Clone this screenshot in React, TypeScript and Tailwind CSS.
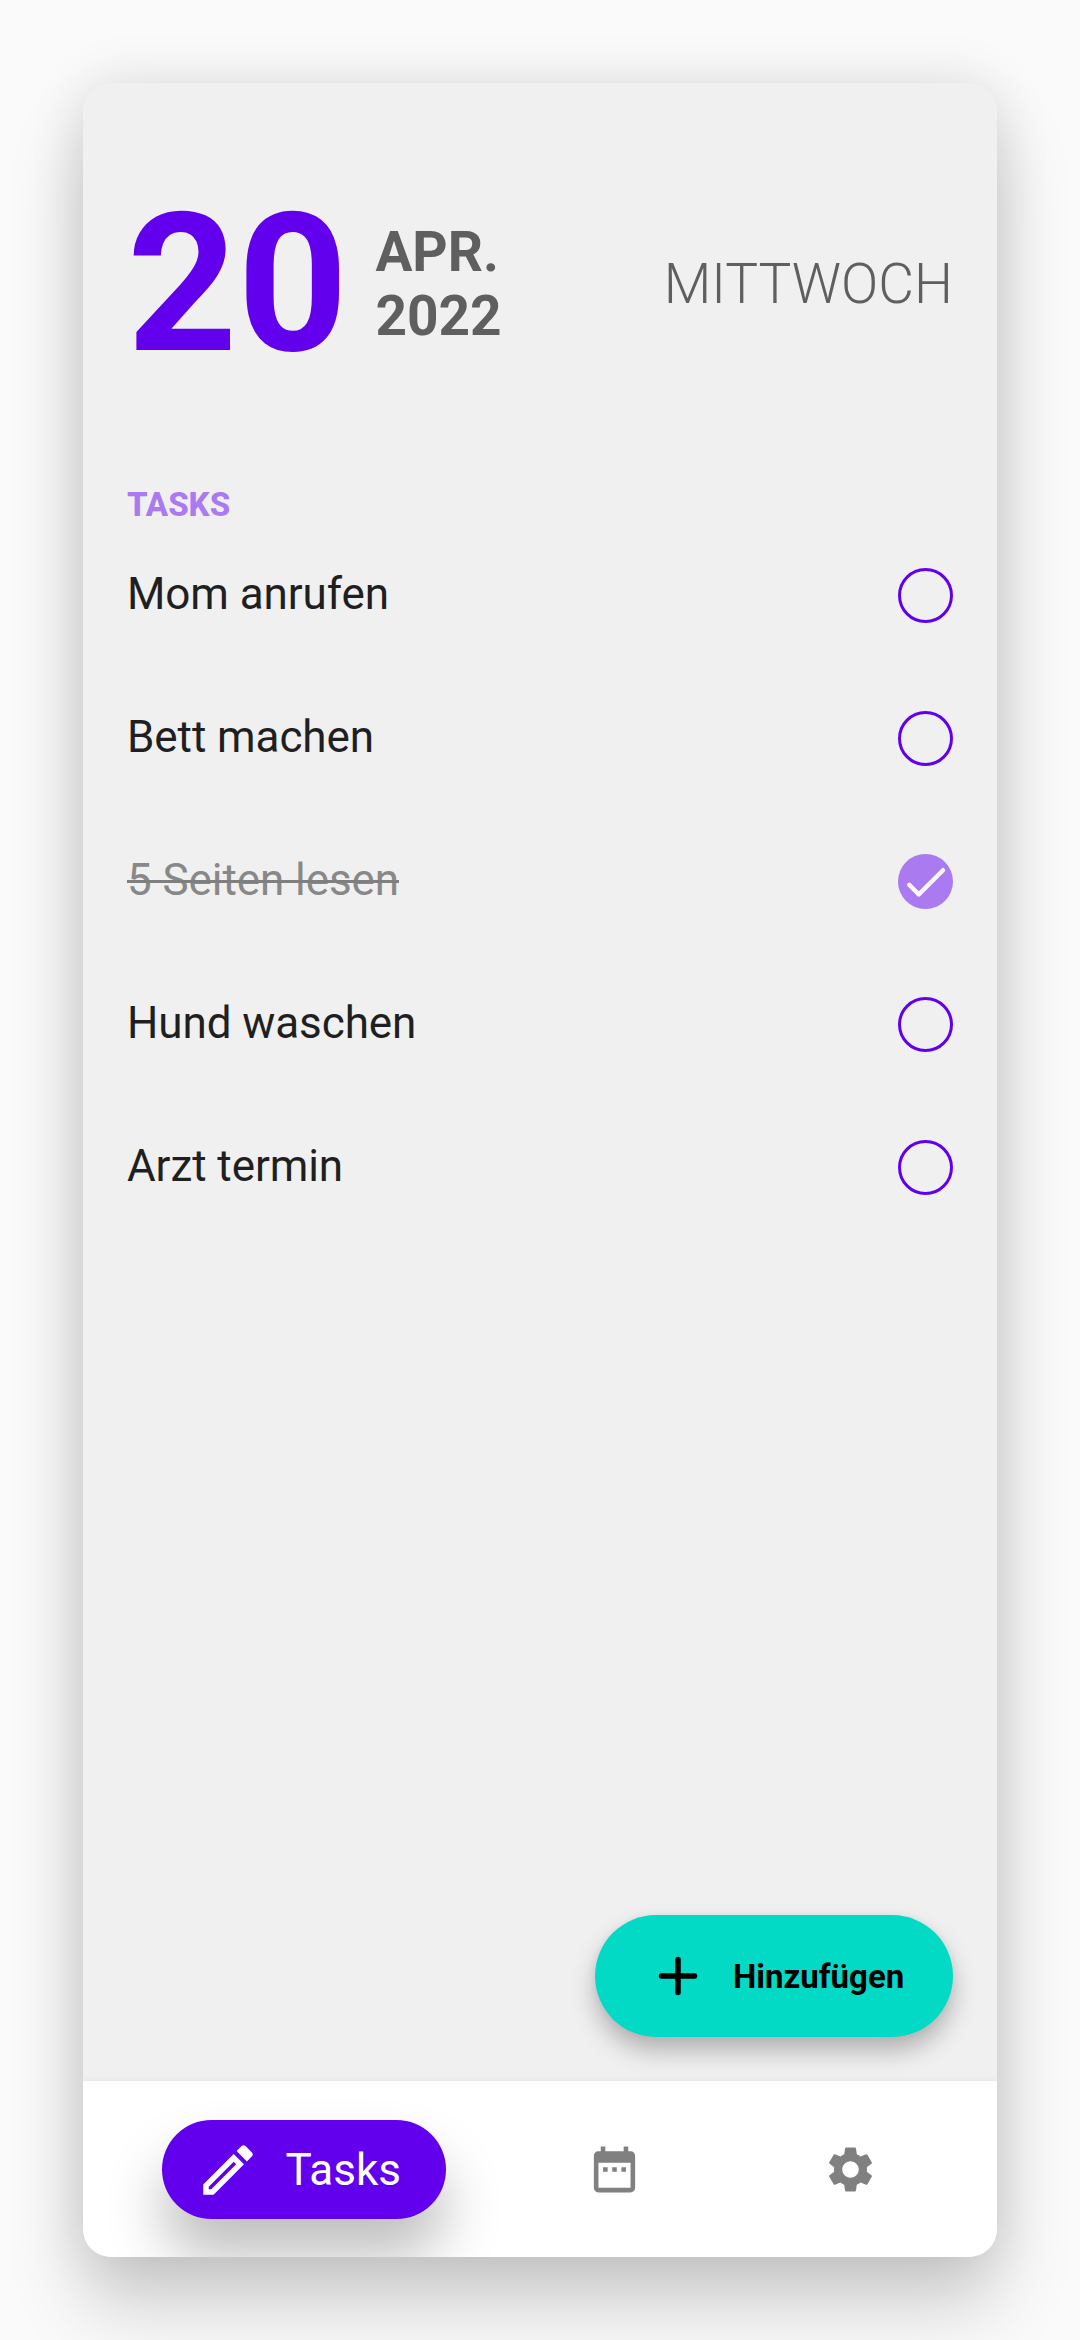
const tasks = [
  { text: "Mom anrufen", done: false },
  { text: "Bett machen", done: false },
  { text: "5 Seiten lesen", done: true },
  { text: "Hund waschen", done: false },
  { text: "Arzt termin", done: false },
];

function Icon({ d, className }: { d: string; className: string }) {
  return (
    <svg viewBox="0 0 24 24" fill="currentColor" className={className}>
      <path d={d} />
    </svg>
  );
}

const PENCIL =
  "M14.06 9.02l.92.92L5.92 19H5v-.92l9.06-9.06M17.66 3c-.25 0-.51.1-.7.29l-1.83 1.83 3.75 3.75 1.83-1.83c.39-.39.39-1.02 0-1.41l-2.34-2.34c-.2-.2-.45-.29-.71-.29zm-3.6 3.19L3 17.25V21h3.75L17.81 9.94l-3.75-3.75z";
const CALENDAR =
  "M9 11H7v2h2v-2zm4 0h-2v2h2v-2zm4 0h-2v2h2v-2zm2-7h-1V2h-2v2H8V2H6v2H5c-1.11 0-1.99.9-1.99 2L3 20c0 1.1.89 2 2 2h14c1.1 0 2-.9 2-2V6c0-1.1-.9-2-2-2zm0 16H5V9h14v11z";
const GEAR =
  "M19.14 12.94c.04-.3.06-.61.06-.94 0-.32-.02-.64-.07-.94l2.03-1.58c.18-.14.23-.41.12-.61l-1.92-3.32c-.12-.22-.37-.29-.59-.22l-2.39.96c-.5-.38-1.03-.7-1.62-.94l-.36-2.54c-.04-.24-.24-.41-.48-.41h-3.84c-.24 0-.43.17-.47.41l-.36 2.54c-.59.24-1.13.57-1.62.94l-2.39-.96c-.22-.08-.47 0-.59.22L2.74 8.87c-.12.21-.08.47.12.61l2.03 1.58c-.05.3-.09.63-.09.94s.02.64.07.94l-2.03 1.58c-.18.14-.23.41-.12.61l1.92 3.32c.12.22.37.29.59.22l2.39-.96c.5.38 1.03.7 1.62.94l.36 2.54c.05.24.24.41.48.41h3.84c.24 0 .44-.17.47-.41l.36-2.54c.59-.24 1.13-.56 1.62-.94l2.39.96c.22.08.47 0 .59-.22l1.92-3.32c.12-.22.07-.47-.12-.61l-2.01-1.58zM12 15.6c-1.98 0-3.6-1.62-3.6-3.6s1.62-3.6 3.6-3.6 3.6 1.62 3.6 3.6-1.62 3.6-3.6 3.6z";

export default function App() {
  return (
    <div className="flex h-[2340px] w-[1080px] overflow-hidden bg-[#fafafa] p-[83px] font-[Roboto,sans-serif]">
      <div className="flex h-[2174px] w-full flex-col overflow-hidden rounded-[28px] bg-[#f0f0f0] shadow-[0_48px_76px_rgba(0,0,0,0.18),0_0_56px_rgba(0,0,0,0.11)]">
        <header className="flex h-[402px] items-center px-[44px]">
          <span className="text-[192.5px] leading-none font-bold text-[#6200ee]">20</span>
          <span className="ml-[27.5px] text-[55px] leading-[64px] font-bold text-[#5f5f5f]">
            APR.
            <br />
            2022
          </span>
          <span className="ml-auto text-[55px] leading-[64px] font-light text-[#5f5f5f]">MITTWOCH</span>
        </header>
        <main className="flex flex-1 flex-col px-[44px]">
          <h2 className="text-[33px] leading-[39px] font-extrabold text-[#a97af0]">TASKS</h2>
          <ul>
            {tasks.map((t) => (
              <li key={t.text} className="flex h-[143px] items-center justify-between">
                <span
                  className={
                    t.done
                      ? "pb-[3px] text-[44px] leading-[52px] tracking-[-0.08px] text-[#888888] line-through decoration-[#7f7f7f] decoration-[3px]"
                      : "pb-[3px] text-[44px] leading-[52px] tracking-[-0.08px] text-[#1f1f1f]"
                  }
                >
                  {t.text}
                </span>
                {t.done ? (
                  <span className="size-[55px] rounded-full bg-[#a97af0] text-[#f8f8f8]">
                    <svg
                      viewBox="0 0 55 55"
                      className="size-[55px]"
                      fill="none"
                      stroke="currentColor"
                      strokeWidth="4.4"
                      strokeLinecap="round"
                      strokeLinejoin="round"
                    >
                      <path d="M11.2 30.8l9.6 9.6 24.2-24.2" />
                    </svg>
                  </span>
                ) : (
                  <span className="size-[55px] rounded-full border-[3px] border-[#6200ee]" />
                )}
              </li>
            ))}
          </ul>
          <button className="mt-auto mb-[44px] flex h-[122px] w-[358px] items-center self-end rounded-full bg-[#03dac5] pl-[50px] text-[33px] leading-[39px] font-bold text-black shadow-[0_14px_24px_rgba(0,0,0,0.26),0_0_8px_rgba(0,0,0,0.05)]">
            <svg
              viewBox="0 0 24 24"
              className="mr-[22px] size-[66px]"
              fill="none"
              stroke="currentColor"
              strokeWidth="2"
              strokeLinecap="round"
            >
              <path d="M12 6v12M6 12h12" />
            </svg>
            Hinzufügen
          </button>
        </main>
        <nav className="flex h-[176px] items-center bg-white text-[#808080] shadow-[0_0_8px_rgba(0,0,0,0.06)]">
          <div className="mt-px ml-[79px] flex h-[99px] w-[284px] items-center rounded-full bg-[#6200ee] pl-[33px] text-[44px] leading-[52px] text-white shadow-[0_38px_56px_rgba(0,0,0,0.25)]">
            <Icon d={PENCIL} className="mr-[24.5px] size-[66px]" />
            Tasks
          </div>
          <Icon d={CALENDAR} className="ml-[141px] size-[55px]" />
          <Icon d={GEAR} className="ml-[181px] size-[55px]" />
        </nav>
      </div>
    </div>
  );
}
